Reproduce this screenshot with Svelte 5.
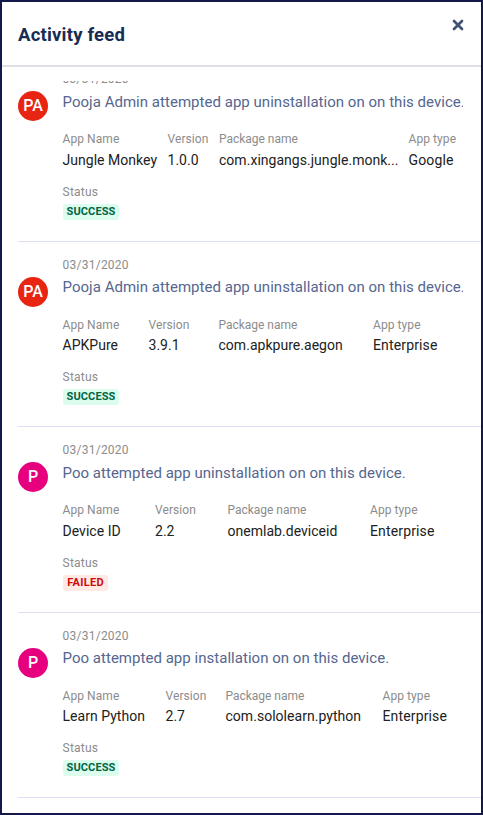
<script>
  const entries = [
    {
      initials: 'PA', color: '#e82413', date: '03/31/2020', who: 'Pooja Admin', action: 'uninstallation', status: 'SUCCESS',
      columns: [105, 51.5, 189.5, 54],
      details: [['App Name', 'Jungle Monkey'], ['Version', '1.0.0'], ['Package name', 'com.xingangs.jungle.monk...'], ['App type', 'Google']]
    },
    {
      initials: 'PA', color: '#e82413', date: '03/31/2020', who: 'Pooja Admin', action: 'uninstallation', status: 'SUCCESS',
      columns: [86, 70, 154.5, 89],
      details: [['App Name', 'APKPure'], ['Version', '3.9.1'], ['Package name', 'com.apkpure.aegon'], ['App type', 'Enterprise']]
    },
    {
      initials: 'P', color: '#e6007e', date: '03/31/2020', who: 'Poo', action: 'uninstallation', status: 'FAILED',
      columns: [92.5, 72.5, 142.5, 92],
      details: [['App Name', 'Device ID'], ['Version', '2.2'], ['Package name', 'onemlab.deviceid'], ['App type', 'Enterprise']]
    },
    {
      initials: 'P', color: '#e6007e', date: '03/31/2020', who: 'Poo', action: 'installation', status: 'SUCCESS',
      columns: [103, 60, 157, 79],
      details: [['App Name', 'Learn Python'], ['Version', '2.7'], ['Package name', 'com.sololearn.python'], ['App type', 'Enterprise']]
    }
  ];
</script>

<main class="panel">
  <header>
    <h1>Activity feed</h1>
    <button aria-label="Close">
      <svg width="12" height="12" viewBox="0 0 12 12"><path d="M2 2 10 10M10 2 2 10" /></svg>
    </button>
  </header>
  <div class="feed">
    <div class="list">
      {#each entries as entry}
        <article>
          <div class="avatar" style="background:{entry.color}">{entry.initials}</div>
          <div class="body">
            <div class="date">{entry.date}</div>
            <div class="title">{entry.who} attempted app {entry.action} on on this device.</div>
            <div class="details" style="grid-template-columns:{entry.columns.map((c) => c + 'px').join(' ')}">
              {#each entry.details as [label, value]}
                <div class="cell">
                  <div class="label">{label}</div>
                  <div class="value">{value}</div>
                </div>
              {/each}
            </div>
            <div class="label">Status</div>
            <span class="badge" class:failed={entry.status === 'FAILED'}>{entry.status}</span>
          </div>
        </article>
      {/each}
    </div>
  </div>
</main>

<style>
  .panel {
    box-sizing: border-box;
    width: 483px;
    height: 815px;
    border: 2px solid #14184b;
    background: #fff;
    display: flex;
    flex-direction: column;
    overflow: hidden;
    font-family: Roboto, "Liberation Sans", sans-serif;
  }
  header {
    box-sizing: border-box;
    height: 65px;
    flex: none;
    display: flex;
    justify-content: space-between;
    align-items: flex-start;
    border-bottom: 2px solid #dde1e6;
    padding: 17px 17px 0 16px;
  }
  h1 {
    margin: 3px 0 0;
    font-size: 18.5px;
    line-height: 26px;
    font-weight: 700;
    color: #172b53;
    letter-spacing: 0.2px;
  }
  button {
    display: flex;
    padding: 0;
    border: 0;
    background: none;
  }
  svg {
    display: block;
  }
  path {
    fill: none;
    stroke: #3f5273;
    stroke-width: 2.7;
    stroke-linecap: round;
  }
  .feed {
    margin-top: 14px;
    flex: 1;
    min-height: 0;
    overflow: hidden;
  }
  .list {
    margin-top: -24.7px;
  }
  article {
    box-sizing: border-box;
    height: 185.5px;
    margin-left: 16px;
    border-bottom: 1px solid #dbe0f6;
    display: flex;
    align-items: flex-start;
    gap: 14.5px;
  }
  .avatar {
    flex: none;
    width: 30px;
    height: 30px;
    margin-top: 35.1px;
    border-radius: 50%;
    color: #fff;
    font-size: 16px;
    line-height: 30px;
    font-weight: 500;
    text-align: center;
  }
  .body {
    width: 400px;
    padding-top: 14px;
    white-space: nowrap;
  }
  .date,
  .label {
    font-size: 12px;
    line-height: 18px;
    color: #8c8c8c;
    letter-spacing: 0.25px;
  }
  .title {
    margin-top: 1.5px;
    overflow: hidden;
    font-size: 15px;
    line-height: 24px;
    color: #55668f;
    letter-spacing: 0.03px;
  }
  .details {
    display: grid;
    margin: 16.6px 0 12.9px;
  }
  .value {
    margin-top: 1.5px;
    font-size: 14px;
    line-height: 20px;
    color: #212121;
    letter-spacing: 0.03px;
  }
  .cell .label {
    letter-spacing: 0.08px;
  }
  .cell:nth-child(3) .label {
    letter-spacing: -0.02px;
  }
  .cell:nth-child(4) .value {
    letter-spacing: 0.14px;
  }
  .badge {
    display: block;
    box-sizing: border-box;
    width: 56px;
    height: 16px;
    margin: 3px 0 0 0.5px;
    border-radius: 3px;
    background: #dcfcee;
    color: #006644;
    font-size: 11px;
    line-height: 15px;
    font-weight: 700;
    letter-spacing: 0.1px;
    text-align: center;
  }
  .failed {
    width: 45px;
    background: #ffe9e5;
    color: #cf0a0a;
    letter-spacing: 0.3px;
  }
</style>
